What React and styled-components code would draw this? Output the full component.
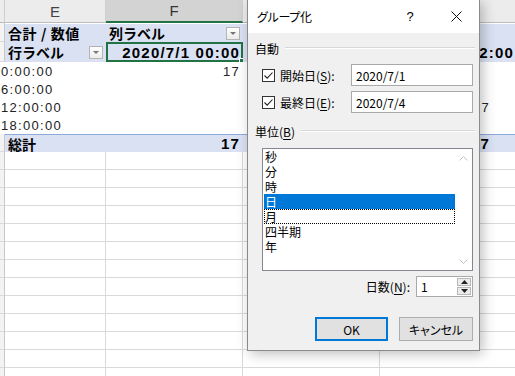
import React from 'react';
import styled, { createGlobalStyle, css } from 'styled-components';

const GlobalStyle = createGlobalStyle`
  html, body { margin: 0; padding: 0; background: #fff; overflow: hidden; }
  body { font-family: "Noto Sans CJK JP", "Liberation Sans", sans-serif; }
`;

const COLS = '5px 101px 137px 137px 137px';
const GRID = '#d9d9d9';
const BLUE = '#d9e1f2';

const Screen = styled.div`
  position: relative;
  width: 515px;
  height: 376px;
  overflow: hidden;
`;

const Sheet = styled.div`
  width: 517px;
  display: flex;
  flex-direction: column;
`;

const Row = styled.div`
  display: grid;
  grid-template-columns: ${COLS};
  height: ${p => p.$h}px;
`;

const Strip = styled.div`
  box-sizing: border-box;
  background: #f3f3f3;
  border-right: 1px solid #c8c8c8;
  border-bottom: 1px solid ${GRID};
`;

const HeadCell = styled.div`
  box-sizing: border-box;
  display: flex;
  align-items: center;
  justify-content: center;
  background: #ececec;
  border-right: 1px solid #cfcfcf;
  border-bottom: 1px solid #bdbdbd;
  color: #444;
  font: 15px "Liberation Sans", sans-serif;
  ${p => p.$active && css`
    background: #d3d3d3;
    border-bottom: 2px solid #217346;
    color: #333;
  `}
`;

const PivotCell = styled.div`
  position: relative;
  box-sizing: border-box;
  display: flex;
  align-items: center;
  justify-content: ${p => (p.$right ? 'flex-end' : 'flex-start')};
  padding: 0 3px;
  background: ${p => (p.$blue ? BLUE : '#fff')};
  ${p => p.$top && css`border-top: 1px solid #fff;`}
  ${p => p.$total && css`border-top: 1px solid #8ea9db;`}
  font-size: 14px;
  font-weight: ${p => (p.$bold ? 700 : 400)};
  color: #000;
  white-space: nowrap;
  overflow: hidden;
  ${p => p.$span && css`
    grid-column: 1 / 3;
    padding-left: 1px;
  `}
  ${p => p.$selected && css`
    overflow: visible;
    box-shadow: inset 0 0 0 2px #217346;
    &::after {
      content: '';
      position: absolute;
      right: -3px;
      bottom: -3px;
      width: 5px;
      height: 5px;
      background: #217346;
      border: 1px solid #fff;
    }
  `}
`;

const JpText = styled.span`
  letter-spacing: ${p => p.$ls || 0}px;
`;

const NumText = styled.span`
  font: ${p => (p.$bold ? 700 : 400)} ${p => (p.$bold ? 15 : 13)}px "Liberation Sans", sans-serif;
  letter-spacing: ${p => (p.$bold ? 1.2 : 1.3)}px;
  color: ${p => (p.$bold ? '#000' : '#222')};
  padding-right: ${p => p.$pr || 0}px;
`;

const DropButton = styled.span`
  box-sizing: border-box;
  margin-left: auto;
  width: 14px;
  height: 13px;
  border: 1px solid #b4b4b4;
  background: linear-gradient(#fdfdfd, #ececec);
  display: flex;
  align-items: center;
  justify-content: center;
  &::before {
    content: '';
    border-left: 3px solid transparent;
    border-right: 3px solid transparent;
    border-top: 3px solid #777;
  }
`;

const GridCell = styled.div`
  box-sizing: border-box;
  border-right: 1px solid ${GRID};
  border-bottom: 1px solid ${GRID};
`;

/* ---------- dialog ---------- */

const Dialog = styled.div`
  position: absolute;
  left: 247px;
  top: -1px;
  width: 233px;
  height: 352px;
  box-sizing: border-box;
  border: 1px solid #8a8a8a;
  background: #f0f0f0;
  box-shadow: 3px 3px 12px rgba(0, 0, 0, 0.25);
  display: flex;
  flex-direction: column;
  font: 12px "Noto Sans CJK JP", sans-serif;
  font-feature-settings: "palt";
  color: #000;
`;

const TitleBar = styled.div`
  height: 33px;
  flex: none;
  background: #fff;
  display: flex;
  align-items: center;
  padding-left: 9px;
`;

const Title = styled.span`
  flex: 1;
  font-size: 12px;
  letter-spacing: -0.3px;
`;

const CaptionButton = styled.span`
  width: 46px;
  height: 33px;
  display: flex;
  align-items: center;
  justify-content: center;
  font: 13px "Liberation Sans", sans-serif;
`;

const Body = styled.div`
  flex: 1;
  display: flex;
  flex-direction: column;
  padding: 0 4px 0 7px;
`;

const GroupHead = styled.div`
  display: flex;
  align-items: center;
  gap: 6px;
  height: 14px;
  margin-top: ${p => p.$mt}px;
  &::after {
    content: '';
    flex: 1;
    border-top: 1px solid #d8d8d8;
    border-bottom: 1px solid #fff;
  }
`;

const U = styled.span`
  text-decoration: underline;
  text-underline-offset: 2px;
`;

const FieldRow = styled.div`
  display: flex;
  align-items: center;
  height: 22px;
  margin: ${p => p.$mt}px 2px 0 7px;
`;

const Check = styled.span`
  box-sizing: border-box;
  width: 13px;
  height: 13px;
  border: 1px solid #333;
  background: #fff;
  display: flex;
  margin-right: 5px;
`;

const TextBox = styled.div`
  box-sizing: border-box;
  margin-left: auto;
  width: 122px;
  height: 100%;
  border: 1px solid #a9a9a9;
  background: #fff;
  display: flex;
  align-items: center;
  padding-left: 4px;
  font-size: 12px;
`;

const ListBox = styled.div`
  box-sizing: border-box;
  margin: 10px 2px 0 7px;
  height: 123px;
  border: 1px solid #828790;
  background: #fff;
  display: flex;
`;

const Items = styled.div`
  flex: 1;
  display: flex;
  flex-direction: column;
  padding-left: 1px;
`;

const Item = styled.div`
  box-sizing: border-box;
  height: 15px;
  line-height: 15px;
  padding-left: 1px;
  font-size: 12px;
  overflow: hidden;
  ${p => p.$selected && css`
    background: #0078d7;
    color: #fff;
  `}
  ${p => p.$focus && css`
    border: 1px dotted #000;
    padding-left: 0;
    line-height: 13px;
  `}
`;

const ScrollBar = styled.div`
  width: 17px;
  display: flex;
  flex-direction: column;
  justify-content: space-between;
  align-items: center;
  padding: 7px 0 6px;
`;

const SpinRow = styled.div`
  display: flex;
  align-items: center;
  justify-content: flex-end;
  gap: 6px;
  height: 21px;
  margin: 5px 2px 0 0;
`;

const SpinBox = styled.div`
  box-sizing: border-box;
  width: 57px;
  height: 100%;
  border: 1px solid #a9a9a9;
  background: #fff;
  display: flex;
  align-items: center;
  padding-left: 4px;
`;

const SpinButtons = styled.div`
  margin-left: auto;
  margin-right: 1px;
  width: 14px;
  height: 17px;
  display: flex;
  flex-direction: column;
  gap: 1px;
`;

const SpinHalf = styled.span`
  flex: 1;
  box-sizing: border-box;
  border: 1px solid #b8b8b8;
  background: #ececec;
  display: flex;
  align-items: center;
  justify-content: center;
`;

const ButtonRow = styled.div`
  display: flex;
  justify-content: flex-end;
  gap: 11px;
  margin: 20px 2px 0 0;
`;

const Button = styled.div`
  box-sizing: border-box;
  width: ${p => p.$w}px;
  height: 24px;
  background: #e1e1e1;
  border: ${p => (p.$default ? '2px solid #0078d7' : '1px solid #adadad')};
  display: flex;
  align-items: center;
  justify-content: center;
  font-size: 12px;
`;

const CheckMark = () => (
  <svg width="11" height="11" viewBox="0 0 11 11">
    <polyline points="1.5,5.5 4.2,8.2 9.5,2.5" fill="none" stroke="#222" strokeWidth="1.1" />
  </svg>
);

const Chevron = ({ up }) => (
  <svg width="9" height="5" viewBox="0 0 9 5">
    <polyline points={up ? '0.5,4.5 4.5,0.5 8.5,4.5' : '0.5,0.5 4.5,4.5 8.5,0.5'} fill="none" stroke="#c2c2c2" strokeWidth="1" />
  </svg>
);

const Tri = ({ up }) => (
  <svg width="7" height="4" viewBox="0 0 7 4">
    <polygon points={up ? '0,4 3.5,0 7,4' : '0,0 3.5,4 7,0'} fill="#222" />
  </svg>
);

const CloseIcon = () => (
  <svg width="11" height="11" viewBox="0 0 11 11">
    <path d="M0.5 0.5 L10.5 10.5 M10.5 0.5 L0.5 10.5" stroke="#111" strokeWidth="1" />
  </svg>
);

const units = ['秒', '分', '時', '日', '月', '四半期', '年'];

const dataRows = [
  { label: '0:00:00', f: '17' },
  { label: '6:00:00' },
  { label: '12:00:00', h: '7' },
  { label: '18:00:00' },
];

export default function App() {
  return (
    <Screen>
      <GlobalStyle />
      <Sheet>
        <Row $h={23}>
          <HeadCell />
          <HeadCell>E</HeadCell>
          <HeadCell $active>F</HeadCell>
          <HeadCell />
          <HeadCell />
        </Row>
        <Row $h={19}>
          <Strip />
          <PivotCell $blue $bold $top><JpText $ls={0.6}>合計 / 数値</JpText></PivotCell>
          <PivotCell $blue $bold $top>列ラベル<DropButton /></PivotCell>
          <PivotCell $blue $top />
          <PivotCell $blue $top />
        </Row>
        <Row $h={20}>
          <Strip />
          <PivotCell $blue $bold>行ラベル<DropButton /></PivotCell>
          <PivotCell $blue $right $selected><NumText $bold>2020/7/1 00:00</NumText></PivotCell>
          <PivotCell $blue $right />
          <PivotCell $blue $right><NumText $bold>2020/7/1 12:00</NumText></PivotCell>
        </Row>
        {dataRows.map(r => (
          <Row $h={18} key={r.label}>
            <PivotCell $span><NumText>{r.label}</NumText></PivotCell>
            <PivotCell $right><NumText>{r.f}</NumText></PivotCell>
            <PivotCell $right />
            <PivotCell $right>{r.h && <NumText $pr={24}>{r.h}</NumText>}</PivotCell>
          </Row>
        ))}
        <Row $h={18}>
          <Strip />
          <PivotCell $blue $bold $total>総計</PivotCell>
          <PivotCell $blue $right $total><NumText $bold>17</NumText></PivotCell>
          <PivotCell $blue $right $total />
          <PivotCell $blue $right $total><NumText $bold $pr={24}>7</NumText></PivotCell>
        </Row>
        {Array.from({ length: 13 }, (_, i) => (
          <Row $h={18} key={i}>
            <Strip />
            <GridCell />
            <GridCell />
            <GridCell />
            <GridCell />
          </Row>
        ))}
      </Sheet>

      <Dialog>
        <TitleBar>
          <Title>グループ化</Title>
          <CaptionButton>?</CaptionButton>
          <CaptionButton><CloseIcon /></CaptionButton>
        </TitleBar>
        <Body>
          <GroupHead $mt={8}>自動</GroupHead>
          <FieldRow $mt={9}>
            <Check><CheckMark /></Check>
            開始日(<U>S</U>):
            <TextBox>2020/7/1</TextBox>
          </FieldRow>
          <FieldRow $mt={5}>
            <Check><CheckMark /></Check>
            最終日(<U>E</U>):
            <TextBox>2020/7/4</TextBox>
          </FieldRow>
          <GroupHead $mt={11}><span>単位(<U>B</U>)</span></GroupHead>
          <ListBox>
            <Items>
              {units.map(u => (
                <Item key={u} $selected={u === '日'} $focus={u === '月'}>{u}</Item>
              ))}
            </Items>
            <ScrollBar>
              <Chevron up />
              <Chevron />
            </ScrollBar>
          </ListBox>
          <SpinRow>
            <span>日数(<U>N</U>):</span>
            <SpinBox>
              1
              <SpinButtons>
                <SpinHalf><Tri up /></SpinHalf>
                <SpinHalf><Tri /></SpinHalf>
              </SpinButtons>
            </SpinBox>
          </SpinRow>
          <ButtonRow>
            <Button $w={73} $default>OK</Button>
            <Button $w={74}>キャンセル</Button>
          </ButtonRow>
        </Body>
      </Dialog>
    </Screen>
  );
}
